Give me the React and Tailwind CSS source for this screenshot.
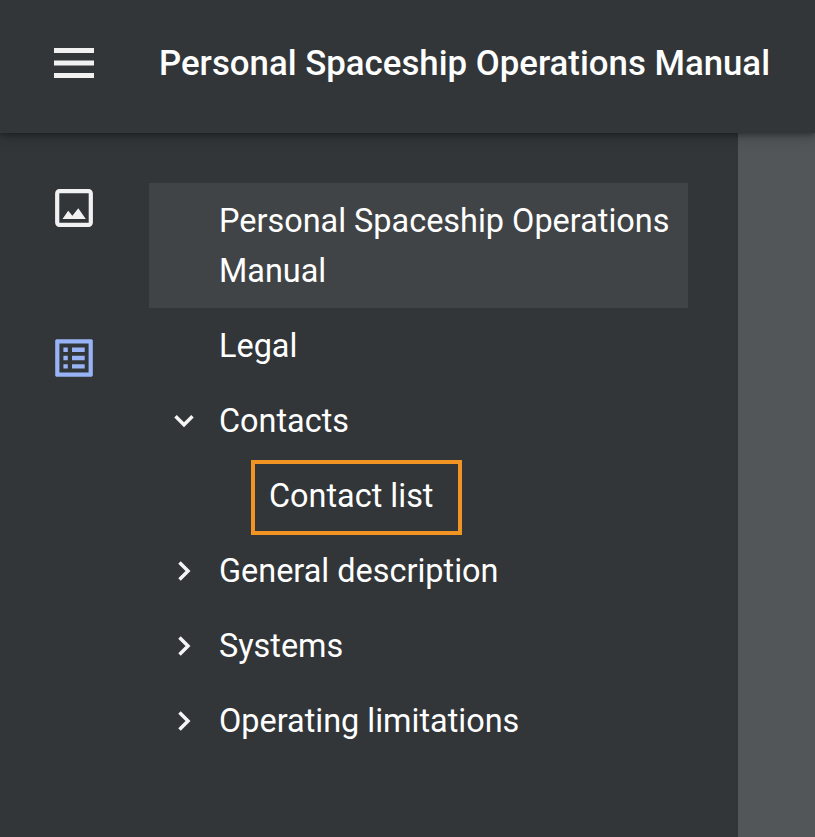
const ITEMS = [
  { label: "Personal Spaceship Operations Manual", selected: true },
  { label: "Legal" },
  { label: "Contacts", state: "open" },
  { label: "Contact list", nested: true },
  { label: "General description", state: "closed" },
  { label: "Systems", state: "closed" },
  { label: "Operating limitations", state: "closed" },
];

function MenuIcon() {
  return (
    <svg className="ml-[54px] h-[30px] w-10 shrink-0" viewBox="0 0 40 30" fill="#f1f1f1">
      <path d="M0 0h40v5H0zM0 12.4h40v5.2H0zM0 25h40v5H0z" />
    </svg>
  );
}

function ImageIcon() {
  return (
    <svg className="size-[50px]" viewBox="0 0 50 50" fill="#f1f1f1">
      <rect x="8.2" y="8.2" width="33.6" height="33.6" rx="2.2" fill="none" stroke="#f1f1f1" strokeWidth="4.2" />
      <path d="M13.5 36 19.2 27.7 23.4 32.7 29.3 25.3 36.8 36z" />
    </svg>
  );
}

function ContentsIcon() {
  return (
    <svg className="size-[50px]" viewBox="0 0 50 50" fill="#98b4f6">
      <path
        fillRule="evenodd"
        d="M7.3 6.2h35.4l1.1 1.1v35.4l-1.1 1.1H7.3l-1.1-1.1V7.3zM10.4 10.4v29.2h29.2V10.4z"
      />
      <path d="M14.4 14.5h4.4v4.4h-4.4zM14.4 22.8h4.4v4.4h-4.4zM14.4 31.2h4.4v4.4h-4.4zM23 14.5h12.7v4.4H23zM23 22.8h12.7v4.4H23zM23 31.2h12.7v4.4H23z" />
    </svg>
  );
}

function Chevron({ open }) {
  return (
    <svg className="size-[50px]" viewBox="0 0 50 50" fill="none" stroke="#f5f5f5" strokeWidth="3.5">
      <path d={open ? "M16.5 20.3 25 28.8 33.5 20.3" : "M20.5 16.5 29 25 20.5 33.5"} />
    </svg>
  );
}

function TreeItem({ item }) {
  if (item.nested) {
    return (
      <li className="flex h-[75px] pt-[2px] pl-[102px]">
        <div className="h-[75px] w-[211px] shrink-0 border-4 border-[#f29423] pt-[7px] pl-[14px]">{item.label}</div>
      </li>
    );
  }
  return (
    <li className={item.selected ? "flex bg-[#414446] py-[12.5px]" : "flex py-[12.5px]"}>
      <div className="ml-[10px] w-[60px] shrink-0">{item.state && <Chevron open={item.state === "open"} />}</div>
      <span className="-mb-[0.5px] pt-[0.5px]">{item.label}</span>
    </li>
  );
}

export default function App() {
  return (
    <div className="flex h-[837px] w-[815px] flex-col overflow-hidden bg-[#525659] font-['Roboto',sans-serif] text-white">
      <header className="z-10 flex h-[133px] shrink-0 items-center bg-[#323639] pb-[7px] shadow-[0_2px_5px_rgba(0,0,0,0.3),0_4px_14px_rgba(0,0,0,0.2)]">
        <MenuIcon />
        <h1 className="ml-[65px] text-[34.8px] leading-[50px] font-medium whitespace-nowrap">
          Personal Spaceship Operations Manual
        </h1>
      </header>
      <aside className="flex w-[738px] flex-1 bg-[#323639] pt-[50px]">
        <nav className="flex w-[149px] shrink-0 flex-col gap-[100px] pl-[49px]">
          <ImageIcon />
          <ContentsIcon />
        </nav>
        <ul className="w-[539px] text-[32.43px] leading-[50px]">
          {ITEMS.map((item) => (
            <TreeItem key={item.label} item={item} />
          ))}
        </ul>
      </aside>
    </div>
  );
}
